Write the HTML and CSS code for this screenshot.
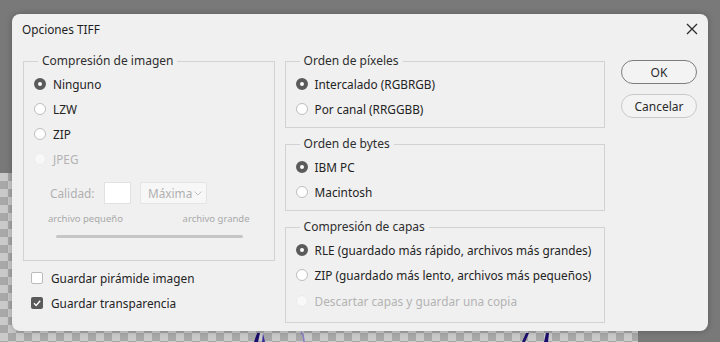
FILE: index.html
```html
<!DOCTYPE html>
<html lang="es">
<head>
  <meta charset="UTF-8" />
  <title>Opciones TIFF</title>
  <link rel="stylesheet" href="styles.css">
</head>
<body>
  <div class="lienzo">
    <svg class="trazos" width="638" height="169" viewBox="0 0 638 169">
      <path d="M254 169 L257 160 L260 160 L258 169 Z" fill="#1b0d6b"/>
      <path d="M262 169 L263 160 L265 169 Z" fill="#3a2a9a"/>
      <path d="M301 159 Q304 163 304 169" stroke="#8d7cc4" stroke-width="1.5" fill="none"/>
      <path d="M522 169 L526 160 L529 160 L525 169 Z" fill="#1b0d6b"/>
      <path d="M544 169 L546 160 L549 160 L548 169 Z" fill="#1b0d6b"/>
    </svg>
  </div>

  <div class="dialogo">
    <div class="titulo">
      <span>Opciones TIFF</span>
      <svg class="cerrar" width="12" height="12" viewBox="0 0 12 12">
        <path d="M1 1 L11 11 M11 1 L1 11" stroke="#2b2b2b" stroke-width="1.3"/>
      </svg>
    </div>

    <div class="contenido">
      <div class="columna-izq">
        <fieldset class="grupo grupo-imagen">
          <legend>Compresión de imagen</legend>
          <div class="opcion"><span class="radio activo"></span>Ninguno</div>
          <div class="opcion"><span class="radio"></span>LZW</div>
          <div class="opcion"><span class="radio"></span>ZIP</div>
          <div class="opcion deshabilitado"><span class="radio"></span>JPEG</div>

          <div class="calidad">
            <span class="etiqueta">Calidad:</span>
            <span class="campo"></span>
            <span class="selector">Máxima
              <svg width="8" height="5" viewBox="0 0 8 5"><path d="M0.5 0.5 L4 4 L7.5 0.5" stroke="#c4c4c4" fill="none"/></svg>
            </span>
          </div>
          <div class="extremos">
            <span>archivo pequeño</span>
            <span>archivo grande</span>
          </div>
          <div class="pista"></div>
        </fieldset>

        <div class="casilla primera"><span class="check"></span>Guardar pirámide imagen</div>
        <div class="casilla"><span class="check marcado">
          <svg width="12" height="12" viewBox="0 0 12 12"><path d="M3 6.2 L5.2 8.4 L9.2 3.8" stroke="#fff" stroke-width="1.4" fill="none"/></svg>
        </span>Guardar transparencia</div>
      </div>

      <div class="columna-centro">
        <fieldset class="grupo">
          <legend>Orden de píxeles</legend>
          <div class="opcion"><span class="radio activo"></span>Intercalado (RGBRGB)</div>
          <div class="opcion"><span class="radio"></span>Por canal (RRGGBB)</div>
        </fieldset>

        <fieldset class="grupo">
          <legend>Orden de bytes</legend>
          <div class="opcion"><span class="radio activo"></span>IBM PC</div>
          <div class="opcion"><span class="radio"></span>Macintosh</div>
        </fieldset>

        <fieldset class="grupo grupo-capas">
          <legend>Compresión de capas</legend>
          <div class="opcion"><span class="radio activo"></span>RLE (guardado más rápido, archivos más grandes)</div>
          <div class="opcion"><span class="radio"></span>ZIP (guardado más lento, archivos más pequeños)</div>
          <div class="opcion deshabilitado ultima"><span class="radio"></span>Descartar capas y guardar una copia</div>
        </fieldset>
      </div>

      <div class="botones">
        <button class="boton principal">OK</button>
        <button class="boton">Cancelar</button>
      </div>
    </div>
  </div>
</body>
</html>
```

FILE: styles.css
```css
body {
  margin: 0;
  width: 720px;
  height: 342px;
  overflow: hidden;
  background: #797979;
  font-family: "Noto Sans", "Open Sans", sans-serif;
  font-size: 11.8px;
  color: #232323;
  position: relative;
}

/* Lienzo de fondo con transparencia */
.lienzo {
  position: absolute;
  left: 0;
  top: 173px;
  width: 638px;
  height: 169px;
  background-color: #cacaca;
  background-image:
    linear-gradient(45deg, #a8a8a8 25%, transparent 25%, transparent 75%, #a8a8a8 75%),
    linear-gradient(45deg, #a8a8a8 25%, transparent 25%, transparent 75%, #a8a8a8 75%);
  background-size: 16px 16px;
  background-position: 0 0, 8px 8px;
}

.trazos {
  display: block;
}

/* Dialogo */
.dialogo {
  position: absolute;
  left: 12px;
  top: 14px;
  width: 696px;
  height: 317px;
  background: #f0f0f0;
  border-radius: 8px;
  box-shadow: 0 0 6px rgba(0, 0, 0, 0.25);
}

.titulo {
  height: 40px;
  display: flex;
  align-items: flex-start;
  justify-content: space-between;
  padding: 7px 10px 0 10px;
  box-sizing: border-box;
  color: #1e1e1e;
}

.cerrar {
  margin-top: 2px;
}

.contenido {
  display: flex;
  padding: 0 11px;
}

.columna-izq {
  width: 252px;
}

.columna-centro {
  width: 321px;
  margin-left: 10px;
  display: flex;
  flex-direction: column;
  gap: 9px;
}

.grupo {
  margin: 0;
  padding: 3px 0 6px 0;
  border: 1px solid #d2d2d2;
  min-width: 0;
}

.grupo legend {
  margin-left: 14px;
  padding: 0 4px;
  line-height: 14px;
  font-size: 12px;
  color: #2e2e2e;
}

.grupo-imagen {
  height: 207px;
  box-sizing: border-box;
}

.grupo-capas {
  padding-bottom: 8px;
}

.opcion {
  height: 25px;
  display: flex;
  align-items: center;
  padding-left: 10px;
}

.opcion.ultima {
  height: 27px;
}

.radio {
  width: 12px;
  height: 12px;
  border-radius: 50%;
  border: 1px solid #bdbdbd;
  background: #fff;
  box-sizing: border-box;
  margin-right: 7px;
}

.radio.activo {
  border: 4px solid #5b5b5b;
}

.deshabilitado {
  color: #b3b3b3;
}

.deshabilitado .radio {
  border-color: #ececec;
  background: #f8f8f8;
}

.calidad {
  display: flex;
  align-items: center;
  margin-top: 11px;
  padding-left: 26px;
  color: #b0b0b0;
}

.etiqueta {
  width: 54px;
}

.campo {
  width: 27px;
  height: 22px;
  box-sizing: border-box;
  border: 1px solid #e2e2e2;
  background: #fff;
}

.selector {
  width: 67px;
  height: 22px;
  box-sizing: border-box;
  margin-left: 9px;
  border: 1px solid #e4e4e4;
  border-radius: 2px;
  background: #f7f7f7;
  display: flex;
  align-items: center;
  justify-content: space-between;
  padding: 0 4px 0 7px;
}

.extremos {
  display: flex;
  justify-content: space-between;
  margin: 8px 24px 0 24px;
  font-size: 9.5px;
  color: #a9a9a9;
}

.pista {
  height: 3px;
  margin: 10px 31px 0 32px;
  background: #c6c6c6;
  border-radius: 2px;
}

.casilla {
  height: 25px;
  display: flex;
  align-items: center;
  padding-left: 8px;
}

.casilla.primera {
  margin-top: 4px;
}

.check {
  width: 12px;
  height: 12px;
  box-sizing: border-box;
  border: 1px solid #bcbcbc;
  border-radius: 2px;
  background: #fff;
  margin-right: 8px;
  display: flex;
}

.check.marcado {
  border: none;
  background: #5a5a5a;
}

.botones {
  margin-left: 16px;
  padding-top: 6px;
  display: flex;
  flex-direction: column;
  gap: 10px;
}

.boton {
  width: 76px;
  height: 24px;
  border-radius: 12px;
  border: 1px solid #c9c9c9;
  background: #f3f3f3;
  font-family: "Noto Sans", "Open Sans", sans-serif;
  font-size: 12px;
  color: #2a2a2a;
  padding: 0;
}

.boton.principal {
  border-color: #7d7d7d;
}
```
